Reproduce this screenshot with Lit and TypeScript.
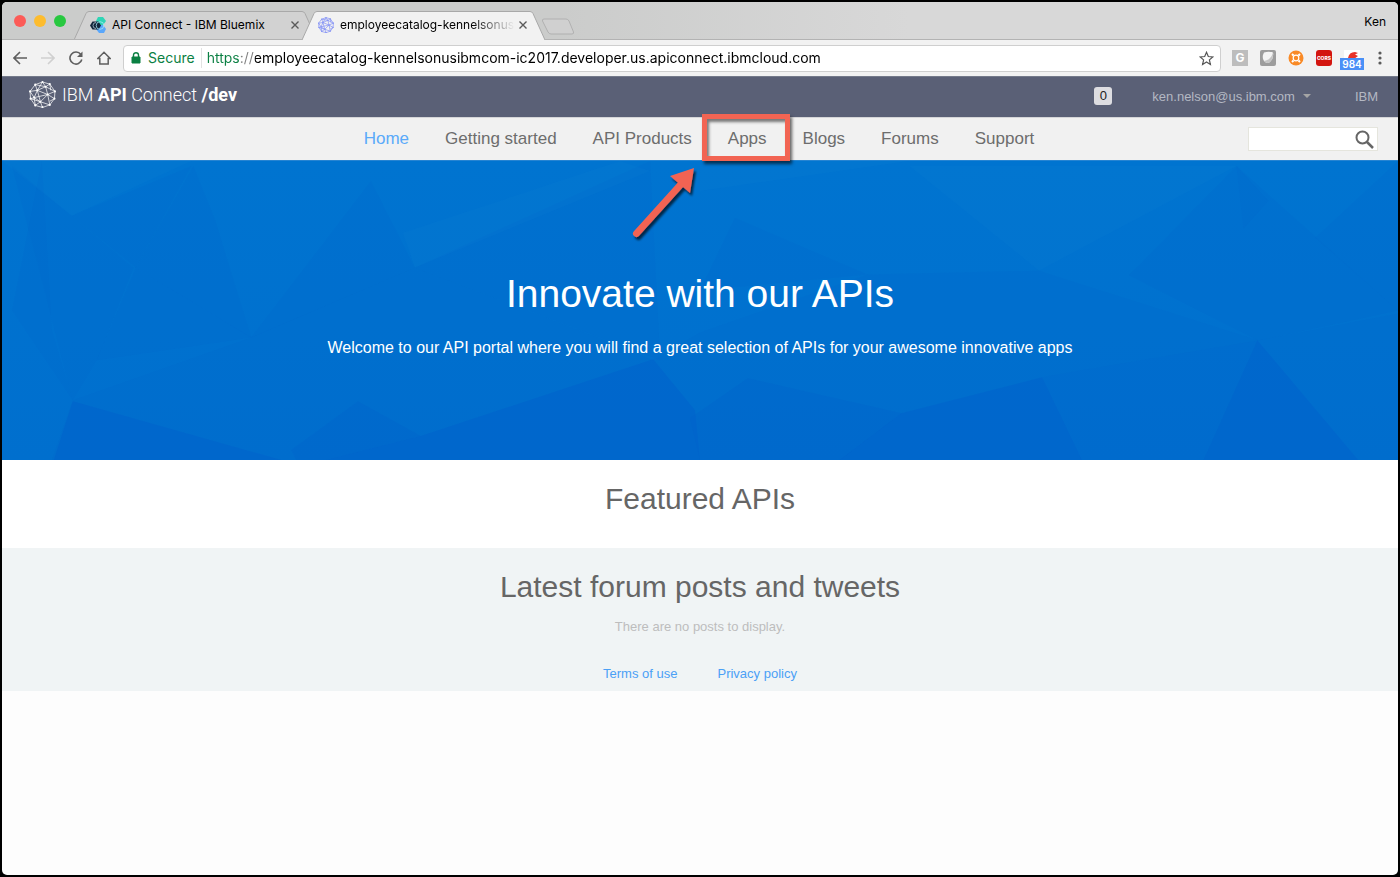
import { LitElement, html, svg, css } from "lit";
import { customElement } from "lit/decorators.js";

const globe = (stroke: string, width: number) => svg`
  <g fill="none" stroke=${stroke} stroke-width=${width} stroke-linejoin="round">
    <path d="M13 1 20 3 25 10 24.500 17 20 23 13 25.500 6 23.500 1.500 17 1 10 6 3.500Z"/>
    <path d="M6 3.500 16 5.500 20 3M13 1 16 5.500 8 9 6 3.500M1 10 8 9 5 16 1.500 17M16 5.500 18 13 8 9M16 5.500 25 10 18 13 24.500 17M5 16 18 13 11 20 5 16 6 23.500 11 20 13 25.500M18 13 20 23 11 20M1 10 5 16M8 9 11 20M20 3 21 9M24.500 17 20 19.500M13 1 8 9M1.500 17 11 20"/>
  </g>
  <g fill=${stroke}>
    ${[[13, 1], [20, 3], [25, 10], [24.5, 17], [20, 23], [13, 25], [6, 23.5], [1.5, 17], [1, 10], [6, 3.5], [16, 5.5], [8, 9], [18, 13], [5, 16], [11, 20]].map(
      ([x, y]) => svg`<circle cx=${x} cy=${y} r="1"/>`
    )}
  </g>`;

const close = html`<svg width="8" height="8" viewBox="0 0 8 8" aria-hidden="true"><path d="M.5.5l7 7M7.500.5l-7 7" stroke="#5a5a5a" stroke-width="1.400"/></svg>`;

@customElement("browser-chrome")
class BrowserChrome extends LitElement {
  static styles = css`
    :host { display: block; font-family: Inter, Roboto, sans-serif; color: #000; }
    button { border: 0; padding: 0; background: none; font: inherit; color: inherit; display: flex; align-items: center; justify-content: center; }
    svg { display: block; flex: none; }
    .strip { display: flex; align-items: flex-end; height: 38px; padding: 0 12px; background: linear-gradient(90deg, #cbcccb 40%, #d8d8d8 65%); box-shadow: inset 0 -1px #b3b3b3; }
    .lights { display: flex; gap: 8px; align-self: flex-start; padding-top: 13px; margin-right: 8px; }
    .light { width: 12px; height: 12px; border-radius: 50%; }
    .red { background: #fc5b57; }
    .amber { background: #fdbc2e; }
    .green { background: #28c840; }
    .tab { position: relative; isolation: isolate; display: flex; align-items: center; width: 243px; height: 29px; padding: 0 14px 2px 16px; box-sizing: border-box; }
    .tab + .tab { margin-left: -15px; }
    .active { z-index: 1; }
    .shape { position: absolute; left: 0; top: 0; width: 100%; height: 100%; z-index: -1; }
    .title { flex: 1; font-size: 12px; line-height: 18px; margin-left: 6px; white-space: nowrap; overflow: hidden; }
    .fade { -webkit-mask-image: linear-gradient(90deg, #000 75%, transparent); }
    .close { width: 16px; height: 16px; }
    .new { align-self: flex-start; margin: 16px 0 0 -4px; }
    .user { margin-left: auto; height: 38px; font-size: 12px; }
    .bar { display: flex; align-items: center; height: 36px; background: #f2f2f2; padding: 0 4px; box-sizing: border-box; }
    .tool { width: 28px; height: 28px; }
    .address { flex: 1; min-width: 0; display: flex; align-items: center; height: 27px; box-sizing: border-box; border: 1px solid #cfcfcf; border-radius: 4px; background: #fff; margin: 0 5px; padding: 0 6px 0 7px; font-size: 14px; }
    .secure { color: #0b8043; margin-left: 7px; padding-right: 6px; line-height: 20px; border-right: 1px solid #e2e2e2; }
    .url { flex: 1; min-width: 0; border: 0; outline: 0; padding: 0 0 0 5px; font: inherit; line-height: 20px; color: #000;
      background: linear-gradient(90deg, #0b8043 39px, #808080 39px 53px, #000 53px); -webkit-background-clip: text; background-clip: text; -webkit-text-fill-color: transparent; }
    .cors { width: 16px; height: 16px; border-radius: 3px; background: #d3150f; color: #fff; font-size: 5px; line-height: 16px; font-weight: 800; text-align: center; overflow: hidden; }
    .letter { width: 16px; height: 16px; background: #bdbdbd; color: #fff; font-size: 12px; line-height: 16px; font-weight: 700; }
    .badged { position: relative; }
    .count { position: absolute; left: 2px; top: 14px; width: 24px; height: 12px; background: #4a90f7; color: #fff; font-size: 10px; line-height: 12px; font-weight: 600; text-align: center; }
  `;

  shape(fill: string, active: boolean) {
    return html`<svg class="shape" viewBox="0 0 243 29" preserveAspectRatio="none" aria-hidden="true">
      <path d="M0 29 12 2.500Q13 .5 15 .5H228Q230 .5 231 2.500L243 29" fill=${fill} stroke="#a9a9a9"/>
      ${active ? svg`<path d="M1 28.500H242" stroke="#f2f2f2"/>` : svg`<path d="M0 28.500H243" stroke="#b3b3b3"/>`}
    </svg>`;
  }

  render() {
    return html`
      <div class="strip">
        <div class="lights"><span class="light red"></span><span class="light amber"></span><span class="light green"></span></div>
        <div class="tab">
          ${this.shape("#d2d2d2", false)}
          <svg width="16" height="16" viewBox="0 0 16 16" aria-hidden="true">
            <path d="M8 0h5l3 4-3 4H8L6 4z" fill="#2fd5b5"/><path d="M8 8h5l3 4-2 4H9L6 12z" fill="#5aa7fb"/>
            <path d="M2.500 4.500h6l2.500 4-2.500 4h-6L0 8.500z" fill="#12263a"/><circle cx="10" cy="8.500" r="3.800" fill="none" stroke="#a5e6f2" stroke-width=".8"/><path d="M6 5.500a3 3 0 0 0 0 6" fill="none" stroke="#9fb2c0" stroke-width=".9"/>
          </svg>
          <span class="title">API Connect - IBM Bluemix</span>
          <button class="close" aria-label="Close tab">${close}</button>
        </div>
        <div class="tab active">
          ${this.shape("#f2f2f2", true)}
          <svg width="16" height="16" viewBox="0 0 26 26" aria-hidden="true">${globe("#8795f5", 1.2)}</svg>
          <span class="title fade">employeecatalog-kennelsonusi</span>
          <button class="close" aria-label="Close tab">${close}</button>
        </div>
        <button class="new" aria-label="New tab"><svg width="34" height="17" viewBox="0 0 34 17"><path d="M3 1H25Q27 1 28 3L32.500 14Q33 16 31 16H10Q8 16 7 14L1.500 3Q1 1 3 1Z" fill="#d0d0d0" stroke="#b0b0b0"/></svg></button>
        <button class="user">Ken</button>
      </div>
      <div class="bar">
        <button class="tool" aria-label="Back"><svg width="14" height="14" viewBox="0 0 14 14" fill="none" stroke="#5f5f5f" stroke-width="1.600"><path d="M14 7H1.500M7 1 1 7l6 6"/></svg></button>
        <button class="tool" aria-label="Forward"><svg width="14" height="14" viewBox="0 0 14 14" fill="none" stroke="#d0d0d0" stroke-width="1.600"><path d="M0 7H12.500M7 1l6 6-6 6"/></svg></button>
        <button class="tool" aria-label="Reload"><svg width="14" height="14" viewBox="0 0 14 14"><path d="M11.800 3.500A6 6 0 1 0 12.800 8.500" fill="none" stroke="#5f5f5f" stroke-width="1.600"/><path d="M13.500.5V6H8z" fill="#5f5f5f"/></svg></button>
        <button class="tool" aria-label="Home"><svg width="14" height="14" viewBox="0 0 14 14" fill="none" stroke="#5f5f5f" stroke-width="1.500"><path d="M.8 7.500 7 1.300l6.200 6.200H11.200V13H2.800V7.500z"/></svg></button>
        <div class="address">
          <svg width="10" height="12" viewBox="0 0 10 12" aria-hidden="true"><path d="M2.500 5V3a2.500 2.300 0 0 1 5 0v2" fill="none" stroke="#0b8043" stroke-width="1.400"/><path d="M1 5h8v6H1z" fill="#0b8043" stroke="#0b8043" stroke-linejoin="round"/></svg>
          <span class="secure">Secure</span>
          <input class="url" type="text" aria-label="Address" value="https://employeecatalog-kennelsonusibmcom-ic2017.developer.us.apiconnect.ibmcloud.com" />
          <button aria-label="Bookmark"><svg width="15" height="15" viewBox="0 0 15 15"><path d="M7.500 1.300 9.300 5.500l4.500.4-3.400 3 1 4.500-3.900-2.400-3.900 2.400 1-4.500-3.400-3 4.500-.4z" fill="none" stroke="#555" stroke-width="1.200"/></svg></button>
        </div>
        <button class="tool" aria-label="Grammar"><span class="letter">G</span></button>
        <button class="tool" aria-label="Shield"><svg width="16" height="16" viewBox="0 0 16 16"><rect width="16" height="16" rx="2" fill="#9d9d9d"/><path d="M4 2.500Q9 1 13 2.500 14 8 10 12 7 14.500 4 11 1.500 7 4 2.500z" fill="#f4f4f4"/><path d="M13 2.500Q14 8 10 12 7 14.500 4 11 11 10 13 2.500z" fill="#c4c4c4"/></svg></button>
        <button class="tool" aria-label="Helper"><svg width="16" height="16" viewBox="0 0 16 16"><circle cx="8" cy="8" r="7.500" fill="#f98a26"/><circle cx="8" cy="8" r="2.800" fill="none" stroke="#fff" stroke-width="1.200"/><path d="M4 4 5.500 5.500M12 4 10.500 5.500M4 12 5.500 10.500M12 12 10.500 10.500" stroke="#fff" stroke-width="2"/></svg></button>
        <button class="tool" aria-label="CORS"><span class="cors">CORS</span></button>
        <button class="tool badged" aria-label="Alerts 984"><svg width="16" height="16" viewBox="0 0 16 16"><path d="M0 0h16v16H0z" fill="#fff"/><path d="M4 8Q5 2 11 2l3 1-3 1.500L14 6l-4 3z" fill="#e8342a"/></svg><span class="count">984</span></button>
        <button class="tool" aria-label="Menu"><svg width="4" height="14" viewBox="0 0 4 14" fill="#5a5a5a"><circle cx="2" cy="2" r="1.600"/><circle cx="2" cy="7" r="1.600"/><circle cx="2" cy="12" r="1.600"/></svg></button>
      </div>
    `;
  }
}

@customElement("app-root")
class AppRoot extends LitElement {
  static styles = css`
    :host { display: flex; flex-direction: column; box-sizing: border-box; min-height: 100vh; padding: 2px; background: #000; font-family: "Liberation Sans", Arial, sans-serif; }
    * { box-sizing: border-box; }
    svg { display: block; flex: none; }
    a { text-decoration: none; color: inherit; }
    h1, h2, p { margin: 0; font-weight: 400; text-align: center; }
    .window { flex: 1; display: flex; flex-direction: column; border-radius: 5px; overflow: hidden; background: #fdfdfd; }
    .top { display: flex; align-items: center; height: 41px; padding: 0 20px 2px 27px; background: #5a6076; border-top: 1px solid #747a8a; color: #b4b8c3; font-size: 13px; }
    .brand { display: flex; align-items: center; gap: 6px; color: #fff; font-family: Roboto, sans-serif; font-weight: 300; font-size: 18px; line-height: 24px; margin-bottom: 3px; }
    .brand b { font-weight: 700; }
    .alerts { margin-left: auto; width: 18px; height: 18px; border-radius: 3px; background: #dddde1; color: #222; text-align: center; line-height: 18px; }
    .account { display: flex; align-items: center; gap: 8px; margin: 0 44px 0 40px; padding: 0; border: 0; background: none; color: inherit; font: inherit; }
    .nav { display: grid; grid-template-columns: 1fr auto 1fr; align-items: center; height: 43px; padding: 0 20px 0 18px; background: #f1f1f1; border-top: 1px solid #d5d5d8; }
    .links { grid-column: 2; display: flex; list-style: none; margin: 0; padding: 0; font-size: 17px; line-height: 20px; color: #6d6d6d; }
    .item { position: relative; padding: 0 18px; }
    .current { color: #5aaafa; }
    .frame { position: absolute; inset: -15px -5px -12px -8px; border: 5px solid #f26453; box-shadow: 2px 3px 3px rgba(0, 0, 0, 0.6), inset 2px 3px 3px rgba(0, 0, 0, 0.5); pointer-events: none; z-index: 2; }
    .arrow { position: absolute; left: -81px; top: 35px; z-index: 2; pointer-events: none; }
    .search { justify-self: end; display: flex; align-items: center; width: 130px; height: 24px; border: 1px solid #e5e5dd; background: #fff; padding-right: 3px; }
    .query { flex: 1; min-width: 0; border: 0; outline: 0; background: none; font: inherit; }
    .go { border: 0; padding: 0; background: none; }
    .hero { position: relative; isolation: isolate; padding: 109px 20px 100px; background: #0070cf; color: #fff; border-top: 1px solid #2684d2; }
    .facets { position: absolute; left: 0; top: 0; width: 100%; height: 100%; z-index: -1; }
    h1 { font-size: 39px; line-height: 48px; }
    .lead { margin-top: 18px; font-size: 16px; line-height: 24px; }
    h2 { font-size: 30px; line-height: 36px; color: #666; }
    .featured { background: #fff; padding: 21px 20px 31px; }
    .forum { background: #f0f4f5; padding: 21px 20px 7px; }
    .none { margin-top: 12px; font-size: 13px; line-height: 20px; color: #bdbdbd; }
    .legal { display: flex; justify-content: center; gap: 40px; margin-top: 27px; font-size: 13px; line-height: 20px; color: #4ba0f5; }
  `;

  render() {
    return html`
      <div class="window">
        <browser-chrome></browser-chrome>
        <header class="top">
          <a class="brand" href="#"><svg width="27" height="27" viewBox="0 0 26 26" aria-hidden="true">${globe("#fff", 0.7)}</svg><span>IBM <b>API</b> Connect <b>/dev</b></span></a>
          <span class="alerts">0</span>
          <button class="account">ken.nelson@us.ibm.com<svg width="8" height="4" viewBox="0 0 8 4" aria-hidden="true"><path d="M0 0h8L4 4z" fill="#a5a5a5"/></svg></button>
          <a href="#">IBM</a>
        </header>
        <nav class="nav">
          <ul class="links">
            <li class="item current"><a href="#">Home</a></li>
            <li class="item"><a href="#">Getting started</a></li>
            <li class="item"><a href="#">API Products</a></li>
            <li class="item">
              <a href="#">Apps</a>
              <span class="frame"></span>
              <svg class="arrow" width="74" height="82" viewBox="0 0 74 82" aria-hidden="true">
                <defs><filter id="soft" x="-20%" y="-20%" width="140%" height="140%"><feDropShadow dx="2" dy="3" stdDeviation="1.200" flood-opacity=".65"/></filter></defs>
                <g filter="url(#soft)"><path d="M7.500 69.500 54 18" stroke="#f26453" stroke-width="7" stroke-linecap="round"/><path d="M65 4 41 12 61 29z" fill="#f26453"/></g>
              </svg>
            </li>
            <li class="item"><a href="#">Blogs</a></li>
            <li class="item"><a href="#">Forums</a></li>
            <li class="item"><a href="#">Support</a></li>
          </ul>
          <form class="search">
            <input class="query" type="search" aria-label="Search" />
            <button class="go" type="button" aria-label="Search"><svg width="19" height="19" viewBox="0 0 19 19" fill="none" stroke="#666" stroke-width="2"><circle cx="7.500" cy="7.500" r="6"/><path d="M12 12l6 6" stroke-width="2.500"/></svg></button>
          </form>
        </nav>
        <section class="hero">
          <svg class="facets" viewBox="0 0 1400 300" preserveAspectRatio="none" aria-hidden="true">
            <defs><linearGradient id="sky" x1="0" y1="0" x2="0" y2="1"><stop offset="0" stop-color="#0074d0"/><stop offset="1" stop-color="#006fce"/></linearGradient></defs>
            <path d="M0 0h1400v300H0z" fill="url(#sky)"/>
            <g fill="#0057cb" fill-opacity=".07">
              <path d="M71 240 250 177 414 107 600 178 653 200 700 172 868 114 1040 110 1260 180 1400 153V300H50z"/>
              <path d="M10 5 132 107 95 200 71 240z"/><path d="M134 107 250 177 95 200z"/>
              <path d="M190 5 134 107 70 55z"/><path d="M192 5 214 60 250 177 134 107z"/>
              <path d="M370 20 414 107 250 177z"/><path d="M735 57 868 114 700 130z"/>
              <path d="M650 0 660 200 414 107z"/><path d="M1238 5 1400 150 1260 180 1130 115z"/>
              <path d="M1238 5 1270 40 1245 68z"/><path d="M1400 0 1317 77 1400 150z"/><path d="M40 0 10 150 71 240 50 170z"/>
            </g>
            <g fill="#1185d8" fill-opacity=".1">
              <path d="M620 0 402 72 414 107 650 10z"/><path d="M910 5 1040 110 1238 5z"/><path d="M0 0h190L70 55z"/><path d="M700 30 910 0H700z"/>
            </g>
            <g fill="#0060cd" fill-opacity=".45">
              <path d="M71 241 52 300H280z"/>
              <path d="M653 199 420 276 325 300H700L695 250z"/>
              <path d="M902 253 1043 217 1083 300H840z"/><path d="M1259 180 1205 300H1360z"/>
            </g>
            <g fill="#0060cd" fill-opacity=".25">
              <path d="M357 241 290 290 295 300H325L420 276z"/><path d="M748 218 690 258 700 300H840L902 253z"/>
            </g>
            <path d="M1043 217 1065 213 1259 180 1205 300H1083z" fill="#0060cd" fill-opacity=".12"/>
          </svg>
          <h1>Innovate with our APIs</h1>
          <p class="lead">Welcome to our API portal where you will find a great selection of APIs for your awesome innovative apps</p>
        </section>
        <section class="featured"><h2>Featured APIs</h2></section>
        <section class="forum">
          <h2>Latest forum posts and tweets</h2>
          <p class="none">There are no posts to display.</p>
          <footer class="legal"><a href="#">Terms of use</a><a href="#">Privacy policy</a></footer>
        </section>
      </div>
    `;
  }
}
